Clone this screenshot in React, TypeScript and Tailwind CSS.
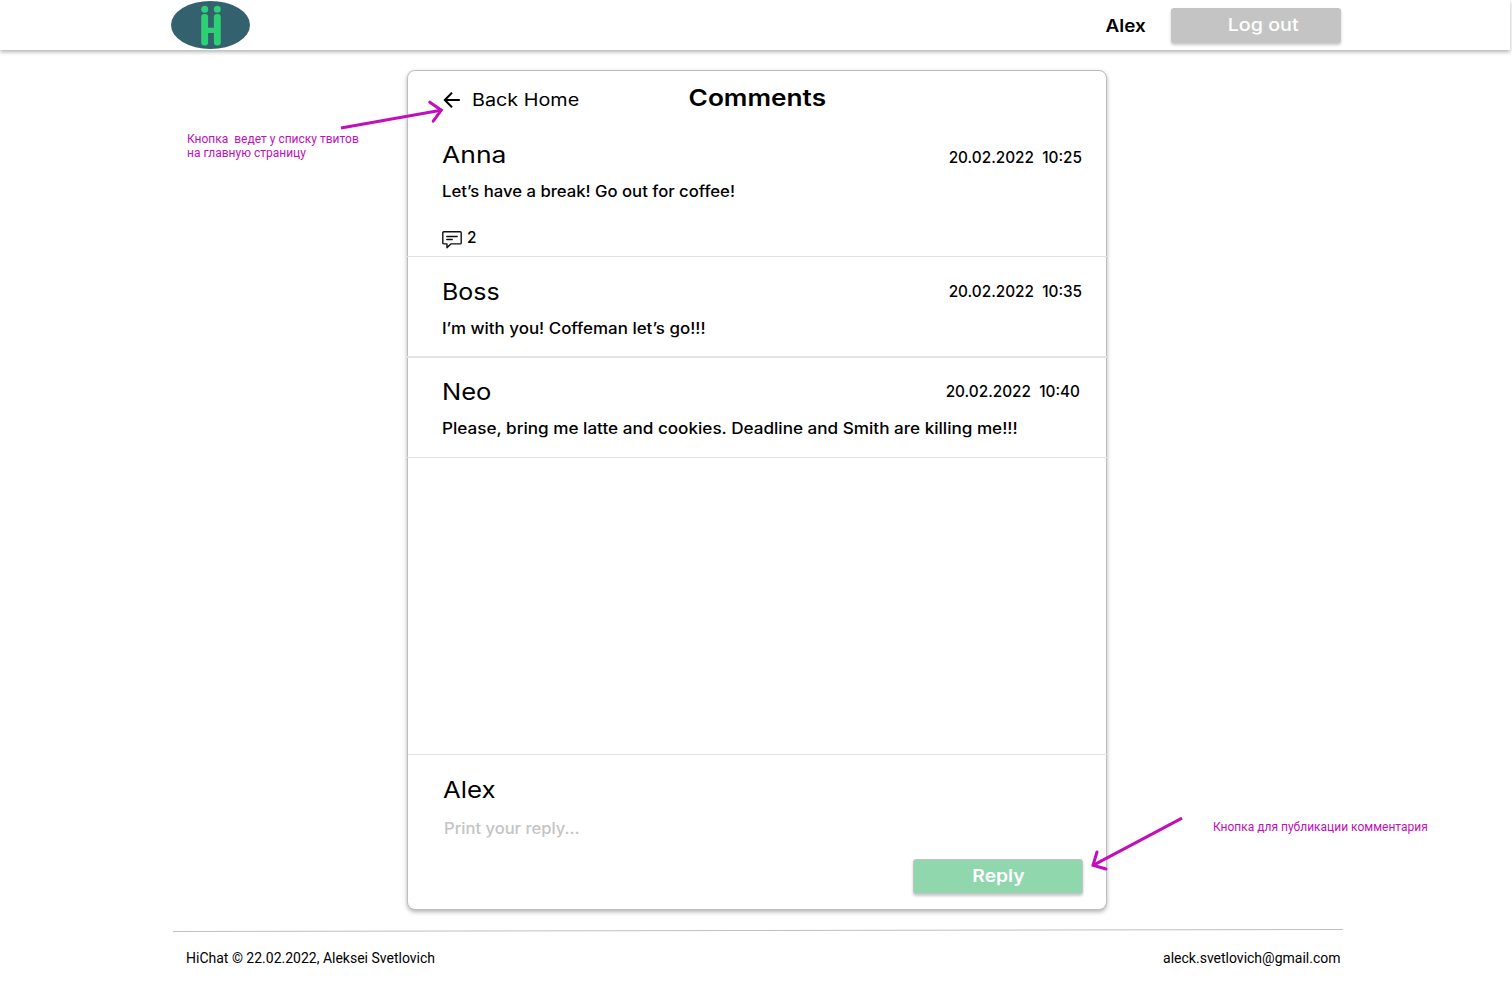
import React from "react";

type Comment = {
  author: string;
  date: string;
  text: string;
  authorClass: string;
  textClass: string;
  dateClass: string;
  rowClass: string;
};

const comments: Comment[] = [
  {
    author: "Boss",
    date: "20.02.2022  10:35",
    text: "I’m with you! Coffeman let’s go!!!",
    authorClass: "scale-x-[1.085]",
    textClass: "scale-x-[1.10]",
    dateClass: "mr-[25px]",
    rowClass: "h-[101px] border-b-2 pt-[19px]",
  },
  {
    author: "Neo",
    date: "20.02.2022  10:40",
    text: "Please, bring me latte and cookies. Deadline and Smith are killing me!!!",
    authorClass: "scale-x-[1.11]",
    textClass: "scale-x-[1.112]",
    dateClass: "mr-[27px]",
    rowClass: "h-[100px] border-b pt-[18px]",
  },
];

function Logo() {
  return (
    <svg className="h-[50px] w-20" viewBox="0 0 80 50">
      <ellipse cx="39.5" cy="25" rx="39.5" ry="24" fill="#33616e" />
      <g fill="#2dd073">
        <circle cx="33.7" cy="9.3" r="3.5" />
        <circle cx="46.3" cy="9.3" r="3.5" />
        <rect x="30.2" y="14" width="6.9" height="31.4" rx="3" />
        <rect x="42.9" y="14" width="6.9" height="31.4" rx="3" />
        <rect x="36" y="27.7" width="8" height="5.3" />
      </g>
    </svg>
  );
}

function BackArrow() {
  return (
    <svg className="h-4 w-[17px]" viewBox="0 0 17 16" fill="none" stroke="#000" strokeWidth="2">
      <path d="M16.8 8H2M9 0.8L1.8 8l7.2 7.2" />
    </svg>
  );
}

function CommentIcon() {
  return (
    <svg className="mt-[3px] h-[19px] w-5" viewBox="0 0 20 19" fill="none" stroke="#111" strokeWidth="1.4" strokeLinejoin="round" strokeLinecap="round">
      <path d="M1.8 1.7h16.4a1 1 0 0 1 1 1v10.2a1 1 0 0 1-1 1H8.8L5 17.7V13.9H1.8a1 1 0 0 1-1-1V2.7a1 1 0 0 1 1-1z" />
      <path d="M4.8 6.5h10.4M4.8 9.5h5.4" />
    </svg>
  );
}

export default function App() {
  return (
    <div className="relative flex h-[982px] w-[1512px] flex-col overflow-hidden bg-white font-['Inter',sans-serif] font-medium text-black">
      <header className="flex h-[50px] w-[1510px] shrink-0 items-center bg-white pr-[169px] pl-[171px] shadow-[0_2px_4px_rgba(0,0,0,0.3)]">
        <Logo />
        <span className="mt-[2px] ml-auto origin-right scale-x-[1.095] text-[17.3px] leading-6 font-semibold">Alex</span>
        <button className="mt-px ml-[25px] flex h-[35px] w-[170px] items-center justify-center rounded-[3px] bg-[#c4c4c4] pb-px pl-[14px] text-[17.3px] text-white shadow-[0_2px_3px_rgba(0,0,0,0.22)]">
          <span className="scale-x-[1.14]">Log out</span>
        </button>
      </header>

      <main className="mt-5 ml-[407px] flex h-[840px] w-[700px] shrink-0 flex-col rounded-lg border border-[#bdbdbd] bg-white shadow-[0_2px_4px_rgba(0,0,0,0.3)]">
        <section className="-mx-px h-[186px] border-b border-[#e3e3e3] pr-[25px] pl-[35px]">
          <div className="grid h-[58px] grid-cols-[1fr_auto_1fr] items-center pr-[9px]">
            <a className="flex items-center gap-[12px] pl-[1px] text-[17.3px] leading-6 whitespace-nowrap">
              <BackArrow />
              <span className="origin-left scale-x-[1.145] font-normal">Back Home</span>
            </a>
            <h1 className="mt-[11px] scale-x-[1.14] self-start text-[23px] leading-8 font-semibold">Comments</h1>
          </div>
          <div className="mt-[10px] flex items-center justify-between">
            <h2 className="origin-left scale-x-[1.15] text-[23px] leading-8 font-normal">Anna</h2>
            <time className="mt-[5px] origin-right scale-x-[0.995] text-[15.4px] leading-6 whitespace-pre">20.02.2022  10:25</time>
          </div>
          <p className="mt-[9px] origin-left scale-x-[1.083] text-[15.4px] leading-6 whitespace-nowrap">Let’s have a break! Go out for coffee!</p>
          <div className="mt-[22px] flex h-6 items-center gap-[5px] text-[15.4px] leading-6">
            <CommentIcon />
            <span>2</span>
          </div>
        </section>

        {comments.map((c) => (
          <section key={c.author} className={`-mx-px border-[#e3e3e3] pl-[35px] ${c.rowClass}`}>
            <div className="flex items-center justify-between">
              <h2 className={`origin-left text-[23px] leading-8 font-normal ${c.authorClass}`}>{c.author}</h2>
              <time className={`origin-right scale-x-[0.995] text-[15.4px] leading-6 whitespace-pre ${c.dateClass}`}>{c.date}</time>
            </div>
            <p className={`mt-[9px] origin-left text-[15.4px] leading-6 whitespace-nowrap ${c.textClass}`}>{c.text}</p>
          </section>
        ))}

        <section className="-mr-px mt-auto flex h-[155px] flex-col border-t border-[#e3e3e3] pt-[19px] pr-[24px] pl-[35px]">
          <h2 className="origin-left scale-x-[1.12] text-[23px] leading-8 font-normal">Alex</h2>
          <p className="mt-[11px] origin-left scale-x-[1.075] pl-[1px] text-[15.4px] leading-6 text-[#c4c4c4]">Print your reply...</p>
          <button className="mt-[18px] flex h-[35px] w-[170px] items-center justify-center self-end rounded-[3px] border border-[#c4c4c4] bg-[#90d7ae] pb-px text-[17.3px] font-semibold text-white shadow-[0_2px_3px_rgba(0,0,0,0.22)]">
            <span className="scale-x-[1.115]">Reply</span>
          </button>
        </section>
      </main>

      <footer className="mt-[18px] flex flex-col pl-[173px] font-['Roboto',sans-serif] text-[14px] font-normal">
        <svg className="h-[5px] w-[1170px]" viewBox="0 0 1170 5">
          <path d="M0 3.5L1170 1.5" stroke="#c0c0c0" strokeWidth="1" />
        </svg>
        <div className="mt-[15px] flex w-[1167.5px] justify-between pl-[13px] leading-5">
          <span>HiChat © 22.02.2022, Aleksei Svetlovich</span>
          <span>aleck.svetlovich@gmail.com</span>
        </div>
      </footer>

      <p className="absolute top-[132px] left-[187px] font-['Roboto',sans-serif] text-[12px] leading-[14px] font-normal whitespace-pre text-[#c20fba]">
        {"Кнопка  ведет у списку твитов\nна главную страницу"}
      </p>
      <p className="absolute top-[820px] left-[1213px] font-['Roboto',sans-serif] text-[12px] leading-[14px] font-normal whitespace-nowrap text-[#c20fba]">
        Кнопка для публикации комментария
      </p>
      <svg className="absolute top-[96px] left-[336px] h-9 w-[112px]" viewBox="336 96 112 36" fill="none" stroke="#c20fba" strokeWidth="3">
        <path d="M341 128L441 110.3" />
        <path d="M429.8 102.2L441.3 110.2L433.2 121.2" strokeLinecap="round" />
      </svg>
      <svg className="absolute top-[812px] left-[1086px] h-[64px] w-[102px]" viewBox="1086 812 102 64" fill="none" stroke="#c20fba" strokeWidth="3">
        <path d="M1182 818.2L1093 865.3" />
        <path d="M1097 852L1093 865.3L1106 869" strokeLinecap="round" />
      </svg>
    </div>
  );
}
